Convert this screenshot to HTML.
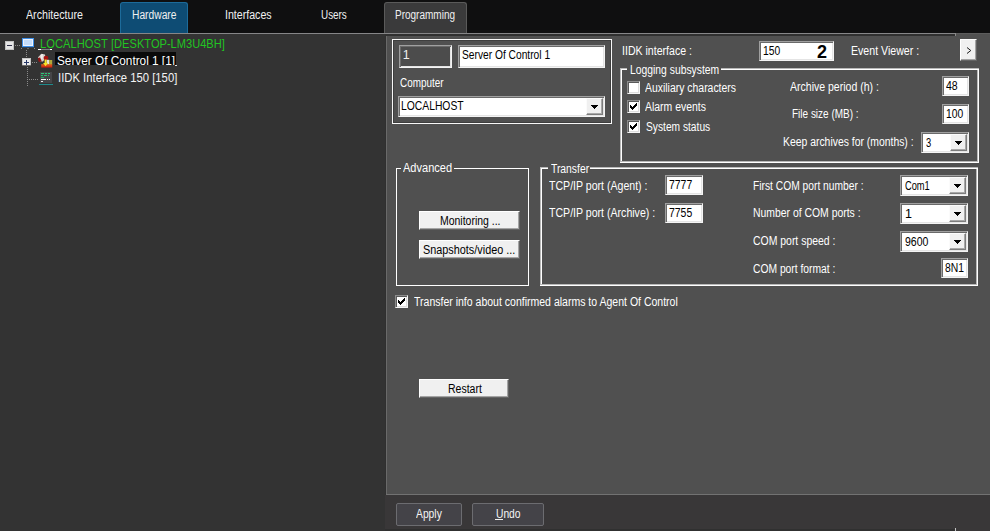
<!DOCTYPE html>
<html><head><meta charset="utf-8">
<style>
html,body{margin:0;padding:0;}
body{width:990px;height:531px;overflow:hidden;background:#0f0f10;position:relative;font-family:"Liberation Sans",sans-serif;font-size:12px;color:#fff;}
.a{position:absolute;}
.t{position:absolute;white-space:nowrap;transform-origin:0 0;}
.tab{position:absolute;top:2px;height:31px;border-radius:3px 3px 0 0;box-sizing:border-box;}
.inp{position:absolute;box-sizing:border-box;background:#fff;border:1px solid;border-color:#a0a0a0 #f4f4f4 #f4f4f4 #a0a0a0;box-shadow:inset 1px 1px 0 #6a6a6a, inset -1px -1px 0 #e4e4e4;}
.btn{position:absolute;box-sizing:border-box;background:#f0f0f0;border:1px solid;border-color:#ffffff #646464 #646464 #ffffff;box-shadow:inset -1px -1px 0 #a4a4a4;}
.dbtn{position:absolute;box-sizing:border-box;background:#f0f0f0;border:1px solid;border-color:#fbfbfb #7c7c7c #7c7c7c #fbfbfb;box-shadow:inset -1px -1px 0 #a8a8a8;}
.cb{position:absolute;box-sizing:border-box;width:13px;height:13px;background:#fff;border:1px solid;border-color:#8c8c8c #f4f4f4 #f4f4f4 #8c8c8c;box-shadow:inset 1px 1px 0 #5a5a5a, inset -1px -1px 0 #dcdcdc;}
.ln{position:absolute;background:#f6f6f6;}
</style></head><body>

<div class="a" style="left:0;top:33px;width:956px;height:1px;background:#868688;"></div>
<div class="a" style="left:956px;top:33px;width:34px;height:1px;background:#5c5c5c;"></div>
<div class="a" style="left:0;top:34px;width:385px;height:497px;background:#333333;"></div>
<div class="a" style="left:385px;top:34px;width:605px;height:461px;background:#505050;"></div>
<div class="a" style="left:385px;top:34px;width:571px;height:2px;background:#303030;"></div>
<div class="a" style="left:955px;top:33px;width:1px;height:3px;background:#8a8a8a;"></div>
<div class="a" style="left:385px;top:36px;width:1px;height:459px;background:#303030;"></div>
<div class="a" style="left:386px;top:36px;width:1px;height:459px;background:#6a6a6a;"></div>
<div class="a" style="left:386px;top:494px;width:604px;height:1px;background:#727272;"></div>
<div class="a" style="left:385px;top:495px;width:605px;height:36px;background:#393738;"></div>
<div class="a" style="left:385px;top:529px;width:570px;height:2px;background:#303030;"></div>
<div class="a" style="left:955px;top:528px;width:1px;height:3px;background:#c4c4c4;"></div>
<div class="tab" style="left:120px;width:68px;background:#0e4c74;border:1px solid #1d6b9a;border-bottom:none;"></div>
<div class="tab" style="left:384px;width:83px;background:#3a3a3b;border:1px solid #5a5a5a;border-bottom:none;"></div>
<div class="t" style="left:25.60px;top:6.67px;font-size:12.5px;line-height:16px;color:#f0f0f0;transform:scaleX(0.8532);">Architecture</div>
<div class="t" style="left:131.50px;top:6.67px;font-size:12.5px;line-height:16px;color:#f0f0f0;transform:scaleX(0.8212);">Hardware</div>
<div class="t" style="left:225.20px;top:6.67px;font-size:12.5px;line-height:16px;color:#f0f0f0;transform:scaleX(0.8492);">Interfaces</div>
<div class="t" style="left:320.60px;top:6.67px;font-size:12.5px;line-height:16px;color:#f0f0f0;transform:scaleX(0.7908);">Users</div>
<div class="t" style="left:395.30px;top:6.67px;font-size:12.5px;line-height:16px;color:#f0f0f0;transform:scaleX(0.8000);">Programming</div>
<div class="a" style="left:5px;top:41px;width:9px;height:9px;box-sizing:border-box;background:#e6e6e6;border:1px solid #c2c2c2;"></div>
<div class="a" style="left:7px;top:45px;width:5px;height:1px;background:#30304a;"></div>
<div class="a" style="left:22px;top:58px;width:9px;height:7px;box-sizing:border-box;background:#ececec;border:1px solid #c8c8c8;border-bottom:none;"></div>
<div class="a" style="left:22px;top:65px;width:9px;height:1px;background:#6a6a6a;"></div>
<div class="a" style="left:24px;top:62px;width:5px;height:1px;background:#283868;"></div>
<div class="a" style="left:26px;top:60px;width:1px;height:5px;background:#283868;"></div>
<div class="a" style="left:15px;top:45px;width:6px;height:1px;background:repeating-linear-gradient(90deg,#8a8a8a 0 1px,transparent 1px 2px);"></div>
<div class="a" style="left:26px;top:50px;width:1px;height:8px;background:repeating-linear-gradient(180deg,#8a8a8a 0 1px,transparent 1px 2px);"></div>
<div class="a" style="left:27px;top:67px;width:1px;height:19px;background:repeating-linear-gradient(180deg,#8a8a8a 0 1px,transparent 1px 2px);"></div>
<div class="a" style="left:32px;top:62px;width:6px;height:1px;background:repeating-linear-gradient(90deg,#8a8a8a 0 1px,transparent 1px 2px);"></div>
<div class="a" style="left:29px;top:79px;width:10px;height:1px;background:repeating-linear-gradient(90deg,#8a8a8a 0 1px,transparent 1px 2px);"></div>
<svg class="a" style="left:21px;top:37px;" width="15" height="13" viewBox="0 0 15 13" shape-rendering="crispEdges"><rect x="1" y="1" width="12" height="9" fill="#3f8fe8"/><rect x="2" y="2" width="10" height="7" fill="#eef4fe"/><rect x="3" y="3" width="8" height="5" fill="#c4dcfa"/><rect x="1" y="10" width="12" height="1" fill="#2a4a70" opacity="0.55"/><rect x="0" y="11" width="1" height="1" fill="#8a8a8a"/><rect x="13" y="11" width="1" height="1" fill="#8a8a8a"/><rect x="6" y="11" width="2" height="1" fill="#6a6a6a"/></svg>
<svg class="a" style="left:37px;top:53px;" width="16" height="15" viewBox="0 0 16 15"><defs><linearGradient id="sg" x1="0" y1="0" x2="0" y2="1"><stop offset="0" stop-color="#e8681a"/><stop offset="1" stop-color="#c41a10"/></linearGradient></defs><path d="M1 4.2 L4.5 0.8 L8 1.5 L8.6 5 L6 8.5 L3 8.5 L1 5.5 Z" fill="#d6d0cc"/><path d="M3.5 1.8 L6 1 L5.5 6 L4 6 Z" fill="#f2eeec"/><path d="M1 5 L3 4.6 L4.8 8.6 L2 9 L1 7 Z" fill="#8c1616"/><circle cx="9" cy="5.1" r="2.4" fill="#a41210"/><rect x="9.6" y="6.8" width="2.6" height="4.8" fill="#e6e2dc"/><rect x="12" y="7" width="3.2" height="4.6" fill="#b0a83a"/><rect x="4.2" y="11.2" width="11" height="3.4" fill="url(#sg)"/><path d="M7.6 6.6 L9.6 6.6 L9.6 10 L11 10 L8.6 13.2 L6 10 L7.6 10 Z" fill="#f6e428"/></svg>
<svg class="a" style="left:39px;top:71px;" width="15" height="14" viewBox="0 0 15 14" shape-rendering="crispEdges"><rect x="1" y="1" width="12" height="11" fill="#454548"/><rect x="2" y="2" width="3" height="1" fill="#2ec878"/><rect x="6" y="2" width="2" height="1" fill="#2ec878"/><rect x="9" y="2" width="2" height="1" fill="#2ec878"/><rect x="2" y="4" width="2" height="1" fill="#28b86c"/><rect x="5" y="4" width="3" height="1" fill="#28b86c"/><rect x="9" y="4" width="1" height="1" fill="#28b86c"/><rect x="2" y="6" width="3" height="1" fill="#24ac64"/><rect x="2" y="8" width="5" height="1" fill="#f4f4f4"/><rect x="8" y="8" width="1" height="1" fill="#f4f4f4"/><rect x="10" y="8" width="1" height="1" fill="#f4f4f4"/><rect x="2" y="10" width="2" height="1" fill="#f0f0f0"/><rect x="0" y="13" width="14" height="1" fill="#1f8a8c"/></svg>
<div class="t" style="left:39.60px;top:35.67px;font-size:12.5px;line-height:16px;color:#22c422;transform:scaleX(0.8958);">LOCALHOST </div>
<div class="t" style="left:110.60px;top:35.67px;font-size:12.5px;line-height:16px;color:#22c422;transform:scaleX(0.8877);">[DESKTOP-LM3U4BH]</div>
<div class="a" style="left:38px;top:49px;width:14px;height:1px;background:#7c7c80;"></div>
<div class="a" style="left:38px;top:49px;width:3px;height:1px;background:#fff;"></div>
<div class="a" style="left:50px;top:49px;width:2px;height:1px;background:#fff;"></div>
<div class="a" style="left:55px;top:52px;width:121px;height:13px;background:#0a0a0a;"></div>
<div class="t" style="left:57.00px;top:52.67px;font-size:12.5px;line-height:16px;color:#ffffff;transform:scaleX(0.9435);">Server Of Control 1 [1]</div>
<div class="a" style="left:55px;top:65px;width:122px;height:3px;background:#333333;"></div>
<div class="a" style="left:175px;top:65px;width:2px;height:1px;background:#e0e0e0;"></div>
<div class="t" style="left:58.30px;top:69.67px;font-size:12.5px;line-height:16px;color:#f4f4f4;transform:scaleX(0.9038);">IIDK Interface 150 [150]</div>
<div class="a" style="left:392px;top:39px;width:220px;height:85px;box-sizing:border-box;border:1px solid #f8f8f8;box-shadow:inset 0 0 0 1px #3e3e3e;"></div>
<div class="inp" style="left:399px;top:45px;width:53px;height:23px;background:#4c4c4c;"></div>
<div class="t" style="left:402.80px;top:46.67px;font-size:12.5px;line-height:16px;color:#f0f0f0;transform:scaleX(1.0000);">1</div>
<div class="inp" style="left:458px;top:45px;width:147px;height:23px;"></div>
<div class="t" style="left:461.60px;top:46.67px;font-size:12.5px;line-height:16px;color:#000;transform:scaleX(0.8181);">Server Of Control 1</div>
<div class="t" style="left:399.50px;top:74.67px;font-size:12.5px;line-height:16px;color:#ffffff;transform:scaleX(0.7927);">Computer</div>
<div class="inp" style="left:398px;top:96px;width:207px;height:21px;"></div>
<div class="dbtn" style="left:586px;top:98px;width:17px;height:17px;"></div>
<svg class="a" style="left:591px;top:105px;" width="7" height="4" viewBox="0 0 7 4" shape-rendering="crispEdges"><path d="M0 0h7v1h-1v1h-1v1h-1v1h-1v-1h-1v-1h-1v-1h-1z" fill="#000"/></svg>
<div class="t" style="left:401.40px;top:97.67px;font-size:12.5px;line-height:16px;color:#000;transform:scaleX(0.8271);">LOCALHOST</div>
<div class="t" style="left:621.50px;top:42.67px;font-size:12.5px;line-height:16px;color:#ffffff;transform:scaleX(0.8466);">IIDK interface :</div>
<div class="inp" style="left:759px;top:41px;width:75px;height:20px;"></div>
<div class="t" style="left:762.80px;top:42.67px;font-size:12.5px;line-height:16px;color:#000;transform:scaleX(0.8240);">150</div>
<div class="t" style="left:817.30px;top:44.42px;font-size:19px;line-height:16px;color:#000;transform:scaleX(0.9483);font-weight:bold;">2</div>
<div class="t" style="left:851.40px;top:42.67px;font-size:12.5px;line-height:16px;color:#ffffff;transform:scaleX(0.8473);">Event Viewer :</div>
<div class="btn" style="left:960px;top:39px;width:17px;height:22px;"></div>
<svg class="a" style="left:964px;top:45px;" width="10" height="11" viewBox="0 0 10 11"><path d="M3 2.5 L6.8 5.5 L3 8.5" fill="none" stroke="#111" stroke-width="0.95"/></svg>
<div class="ln" style="left:620px;top:68px;width:1px;height:95px;background:#b8b8b8;"></div>
<div class="ln" style="left:621px;top:69px;width:1px;height:93px;background:#ffffff;"></div>
<div class="ln" style="left:978px;top:68px;width:1px;height:95px;background:#ffffff;"></div>
<div class="ln" style="left:977px;top:69px;width:1px;height:93px;background:#b8b8b8;"></div>
<div class="ln" style="left:620px;top:68px;width:7px;height:1px;background:#b8b8b8;"></div>
<div class="ln" style="left:621px;top:69px;width:6px;height:1px;background:#ffffff;"></div>
<div class="ln" style="left:721px;top:68px;width:258px;height:1px;background:#b8b8b8;"></div>
<div class="ln" style="left:721px;top:69px;width:257px;height:1px;background:#ffffff;"></div>
<div class="ln" style="left:620px;top:162px;width:359px;height:1px;background:#ffffff;"></div>
<div class="ln" style="left:621px;top:161px;width:357px;height:1px;background:#b8b8b8;"></div>
<div class="t" style="left:629.80px;top:61.67px;font-size:12.5px;line-height:16px;color:#ffffff;transform:scaleX(0.8283);">Logging subsystem</div>
<div class="cb" style="left:627px;top:81px;"></div>
<div class="t" style="left:645.20px;top:79.67px;font-size:12.5px;line-height:16px;color:#ffffff;transform:scaleX(0.8344);">Auxiliary characters</div>
<div class="cb" style="left:627px;top:100px;"></div>
<svg class="a" style="left:627px;top:100px;" width="13" height="13" viewBox="0 0 13 13"><path shape-rendering="crispEdges" d="M3 5h1v1h1v1h1v-1h1v-1h1v-1h1v-1h1v3h-1v1h-1v1h-1v1h-1v1h-1v-1h-1v-1h-1z" fill="#000"/></svg>
<div class="t" style="left:645.20px;top:98.67px;font-size:12.5px;line-height:16px;color:#ffffff;transform:scaleX(0.8363);">Alarm events</div>
<div class="cb" style="left:627px;top:120px;"></div>
<svg class="a" style="left:627px;top:120px;" width="13" height="13" viewBox="0 0 13 13"><path shape-rendering="crispEdges" d="M3 5h1v1h1v1h1v-1h1v-1h1v-1h1v-1h1v3h-1v1h-1v1h-1v1h-1v1h-1v-1h-1v-1h-1z" fill="#000"/></svg>
<div class="t" style="left:645.80px;top:118.67px;font-size:12.5px;line-height:16px;color:#ffffff;transform:scaleX(0.8178);">System status</div>
<div class="t" style="left:790.40px;top:78.67px;font-size:12.5px;line-height:16px;color:#ffffff;transform:scaleX(0.8417);">Archive period (h) :</div>
<div class="inp" style="left:942px;top:76px;width:27px;height:20px;"></div>
<div class="t" style="left:945.80px;top:77.67px;font-size:12.5px;line-height:16px;color:#000;transform:scaleX(0.8432);">48</div>
<div class="t" style="left:791.80px;top:105.67px;font-size:12.5px;line-height:16px;color:#ffffff;transform:scaleX(0.7994);">File size (MB) :</div>
<div class="inp" style="left:942px;top:104px;width:27px;height:20px;"></div>
<div class="t" style="left:946.10px;top:105.67px;font-size:12.5px;line-height:16px;color:#000;transform:scaleX(0.8240);">100</div>
<div class="t" style="left:782.70px;top:133.67px;font-size:12.5px;line-height:16px;color:#ffffff;transform:scaleX(0.8318);">Keep archives for (months) :</div>
<div class="inp" style="left:921px;top:132px;width:48px;height:21px;"></div>
<div class="dbtn" style="left:950px;top:134px;width:17px;height:17px;"></div>
<svg class="a" style="left:955px;top:141px;" width="7" height="4" viewBox="0 0 7 4" shape-rendering="crispEdges"><path d="M0 0h7v1h-1v1h-1v1h-1v1h-1v-1h-1v-1h-1v-1h-1z" fill="#000"/></svg>
<div class="t" style="left:926.00px;top:134.67px;font-size:12.5px;line-height:16px;color:#000;transform:scaleX(0.7495);">3</div>
<div class="ln" style="left:396px;top:168px;width:1px;height:118px;background:#ffffff;"></div>
<div class="ln" style="left:528px;top:168px;width:1px;height:118px;background:#ffffff;"></div>
<div class="ln" style="left:396px;top:168px;width:5px;height:1px;background:#ffffff;"></div>
<div class="ln" style="left:454px;top:168px;width:75px;height:1px;background:#ffffff;"></div>
<div class="ln" style="left:396px;top:285px;width:133px;height:1px;background:#ffffff;"></div>
<div class="t" style="left:403.20px;top:159.67px;font-size:12.5px;line-height:16px;color:#ffffff;transform:scaleX(0.8827);">Advanced</div>
<div class="btn" style="left:419px;top:211px;width:101px;height:19px;"></div>
<div class="t" style="left:439.50px;top:212.67px;font-size:12.5px;line-height:16px;color:#000;transform:scaleX(0.8374);">Monitoring ...</div>
<div class="btn" style="left:419px;top:240px;width:101px;height:19px;"></div>
<div class="t" style="left:423.20px;top:241.67px;font-size:12.5px;line-height:16px;color:#000;transform:scaleX(0.8682);">Snapshots/video ...</div>
<div class="ln" style="left:540px;top:167px;width:1px;height:119px;background:#b8b8b8;"></div>
<div class="ln" style="left:541px;top:168px;width:1px;height:117px;background:#ffffff;"></div>
<div class="ln" style="left:977px;top:167px;width:1px;height:119px;background:#ffffff;"></div>
<div class="ln" style="left:976px;top:168px;width:1px;height:117px;background:#b8b8b8;"></div>
<div class="ln" style="left:540px;top:167px;width:8px;height:1px;background:#b8b8b8;"></div>
<div class="ln" style="left:541px;top:168px;width:7px;height:1px;background:#ffffff;"></div>
<div class="ln" style="left:590px;top:167px;width:388px;height:1px;background:#b8b8b8;"></div>
<div class="ln" style="left:590px;top:168px;width:387px;height:1px;background:#ffffff;"></div>
<div class="ln" style="left:540px;top:285px;width:438px;height:1px;background:#ffffff;"></div>
<div class="ln" style="left:541px;top:284px;width:436px;height:1px;background:#b8b8b8;"></div>
<div class="t" style="left:550.50px;top:160.67px;font-size:12.5px;line-height:16px;color:#ffffff;transform:scaleX(0.8271);">Transfer</div>
<div class="t" style="left:549.20px;top:177.67px;font-size:12.5px;line-height:16px;color:#ffffff;transform:scaleX(0.8455);">TCP/IP port (Agent) :</div>
<div class="inp" style="left:665px;top:175px;width:38px;height:20px;"></div>
<div class="t" style="left:669.00px;top:176.67px;font-size:12.5px;line-height:16px;color:#000;transform:scaleX(0.8342);">7777</div>
<div class="t" style="left:549.20px;top:204.67px;font-size:12.5px;line-height:16px;color:#ffffff;transform:scaleX(0.8462);">TCP/IP port (Archive) :</div>
<div class="inp" style="left:665px;top:203px;width:38px;height:20px;"></div>
<div class="t" style="left:669.00px;top:204.67px;font-size:12.5px;line-height:16px;color:#000;transform:scaleX(0.8342);">7755</div>
<div class="t" style="left:753.10px;top:177.67px;font-size:12.5px;line-height:16px;color:#ffffff;transform:scaleX(0.8208);">First COM port number :</div>
<div class="inp" style="left:900px;top:175px;width:68px;height:21px;"></div>
<div class="dbtn" style="left:949px;top:177px;width:17px;height:17px;"></div>
<svg class="a" style="left:954px;top:184px;" width="7" height="4" viewBox="0 0 7 4" shape-rendering="crispEdges"><path d="M0 0h7v1h-1v1h-1v1h-1v1h-1v-1h-1v-1h-1v-1h-1z" fill="#000"/></svg>
<div class="t" style="left:904.60px;top:177.67px;font-size:12.5px;line-height:16px;color:#000;transform:scaleX(0.7431);">Com1</div>
<div class="t" style="left:753.10px;top:204.67px;font-size:12.5px;line-height:16px;color:#ffffff;transform:scaleX(0.8329);">Number of COM ports :</div>
<div class="inp" style="left:900px;top:203px;width:68px;height:21px;"></div>
<div class="dbtn" style="left:949px;top:205px;width:17px;height:17px;"></div>
<svg class="a" style="left:954px;top:212px;" width="7" height="4" viewBox="0 0 7 4" shape-rendering="crispEdges"><path d="M0 0h7v1h-1v1h-1v1h-1v1h-1v-1h-1v-1h-1v-1h-1z" fill="#000"/></svg>
<div class="t" style="left:905.00px;top:205.67px;font-size:12.5px;line-height:16px;color:#000;transform:scaleX(1.0000);">1</div>
<div class="t" style="left:753.10px;top:232.67px;font-size:12.5px;line-height:16px;color:#ffffff;transform:scaleX(0.8355);">COM port speed :</div>
<div class="inp" style="left:900px;top:231px;width:68px;height:21px;"></div>
<div class="dbtn" style="left:949px;top:233px;width:17px;height:17px;"></div>
<svg class="a" style="left:954px;top:240px;" width="7" height="4" viewBox="0 0 7 4" shape-rendering="crispEdges"><path d="M0 0h7v1h-1v1h-1v1h-1v1h-1v-1h-1v-1h-1v-1h-1z" fill="#000"/></svg>
<div class="t" style="left:904.60px;top:233.67px;font-size:12.5px;line-height:16px;color:#000;transform:scaleX(0.8413);">9600</div>
<div class="t" style="left:753.10px;top:260.67px;font-size:12.5px;line-height:16px;color:#ffffff;transform:scaleX(0.8240);">COM port format :</div>
<div class="inp" style="left:941px;top:258px;width:27px;height:20px;"></div>
<div class="t" style="left:944.50px;top:259.67px;font-size:12.5px;line-height:16px;color:#000;transform:scaleX(0.8283);">8N1</div>
<div class="cb" style="left:395px;top:295px;"></div>
<svg class="a" style="left:395px;top:295px;" width="13" height="13" viewBox="0 0 13 13"><path shape-rendering="crispEdges" d="M3 5h1v1h1v1h1v-1h1v-1h1v-1h1v-1h1v3h-1v1h-1v1h-1v1h-1v1h-1v-1h-1v-1h-1z" fill="#000"/></svg>
<div class="t" style="left:414.10px;top:293.67px;font-size:12.5px;line-height:16px;color:#ffffff;transform:scaleX(0.8413);">Transfer info about confirmed alarms to Agent Of Control</div>
<div class="btn" style="left:419px;top:379px;width:90px;height:19px;"></div>
<div class="t" style="left:447.50px;top:380.67px;font-size:12.5px;line-height:16px;color:#000;transform:scaleX(0.8409);">Restart</div>
<div class="a" style="left:396px;top:503px;width:66px;height:23px;box-sizing:border-box;background:#444348;border:1px solid #6c6c70;border-radius:2px;"></div>
<div class="t" style="left:416.00px;top:505.67px;font-size:12.5px;line-height:16px;color:#f4f4f4;transform:scaleX(0.8256);">Apply</div>
<div class="a" style="left:472px;top:503px;width:72px;height:23px;box-sizing:border-box;background:#444348;border:1px solid #6c6c70;border-radius:2px;"></div>
<div class="t" style="left:495.50px;top:505.67px;font-size:12.5px;line-height:16px;color:#f4f4f4;transform:scaleX(0.8201);">Undo</div>
<div class="a" style="left:495px;top:519px;width:8px;height:1px;background:#f0f0f0;"></div>
</body></html>
